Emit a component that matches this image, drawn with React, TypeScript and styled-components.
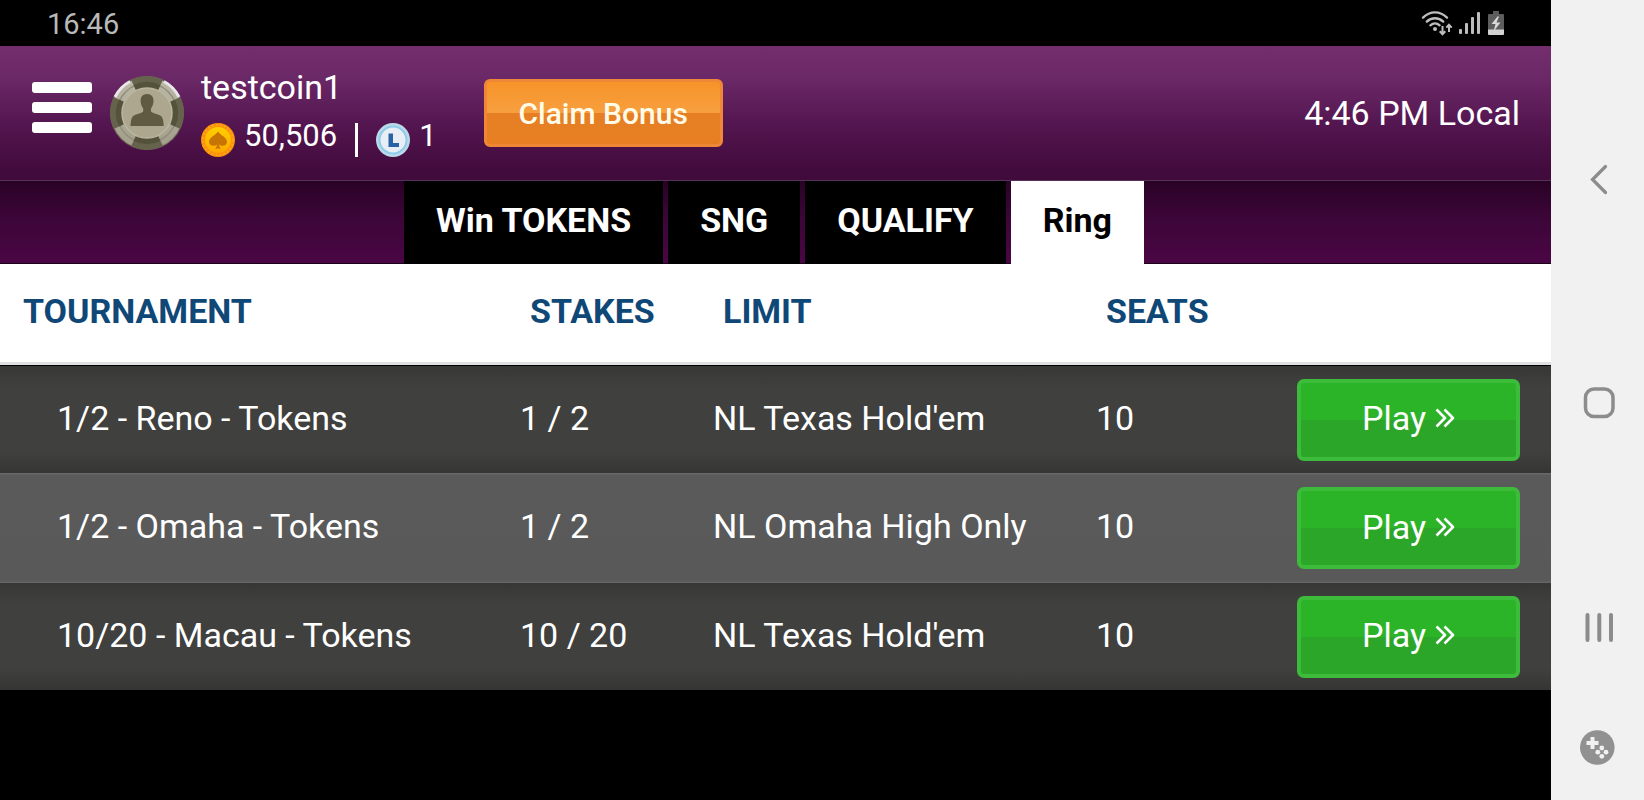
import React from "react";
import styled, { createGlobalStyle } from "styled-components";

const GlobalStyle = createGlobalStyle`
  * { box-sizing: border-box; }
  body { margin: 0; background: #000; }
  button { margin: 0; font-family: inherit; cursor: pointer; }
`;

const Screen = styled.div`
  display: flex;
  min-height: 100vh;
  background: #000;
  color: #fff;
  font-family: Roboto, "Liberation Sans", sans-serif;
  font-size: 34px;
  line-height: 40px;
`;

const Main = styled.div`
  flex: 1;
  min-width: 0;
`;

const StatusBar = styled.div`
  display: flex;
  align-items: center;
  justify-content: space-between;
  height: 46px;
  padding: 2px 47px 0;
  color: #b9b9b9;
  font-size: 29px;
`;

const StatusIcons = styled.div`
  display: flex;
  align-items: center;
  gap: 6px;
  padding-bottom: 2px;
`;

const Header = styled.header`
  display: flex;
  align-items: center;
  height: 135px;
  padding: 0 31px 0 32px;
  border-bottom: 1px solid #55325a;
  background: linear-gradient(#742e6d, #6a2866 25%, #541650 58%, #420b3d 92%, #400a3b);
`;

const MenuButton = styled.button`
  display: flex;
  flex-direction: column;
  gap: 9px;
  padding: 0 0 12px;
  border: 0;
  background: none;
`;

const MenuBar = styled.span`
  width: 60px;
  height: 11px;
  border-radius: 3px;
  background: #fff;
`;

const Avatar = styled.svg`
  width: 74px;
  height: 74px;
  margin: 0 17px 0 18px;
`;

const Account = styled.div`
  display: flex;
  flex-direction: column;
  gap: 16px;
  padding-bottom: 3px;
`;

const Balances = styled.div`
  display: flex;
  align-items: flex-start;
  font-size: 31px;
  line-height: 26px;
`;

const Coin = styled.svg`
  width: 34px;
  height: 34px;
  margin-right: 9px;
`;

const Divider = styled.span`
  width: 3px;
  height: 34px;
  margin: 0 18px;
  background: #fff;
`;

const ClaimButton = styled.button`
  width: 239px;
  height: 68px;
  margin-left: 47px;
  padding: 0;
  border: 3px solid #ee8736;
  border-radius: 6px;
  background: linear-gradient(#f69429, #f79f3f 50%, #e67e24 50%, #e77f22);
  color: #fffbe8;
  font-size: 30px;
  font-weight: 500;
`;

const Clock = styled.time`
  margin-left: auto;
`;

const Tabs = styled.nav`
  display: flex;
  justify-content: center;
  gap: 5px;
  height: 83px;
  padding-right: 3px;
  background: linear-gradient(#2a0226, #3c0638 45%, #4b0645);
  box-shadow: inset 0 -1px #1a0018;
`;

const Tab = styled.button<{ $active?: boolean }>`
  padding: 0 32px 5px;
  border: 0;
  background: ${(p) => (p.$active ? "#fff" : "#000")};
  color: ${(p) => (p.$active ? "#000" : "#fff")};
  font-size: 34px;
  font-weight: 700;
`;

const Lobby = styled.table`
  width: 100%;
  table-layout: fixed;
  border-collapse: collapse;
`;

const HeadRow = styled.tr`
  height: 102px;
  background: linear-gradient(#fff 98px, #dfe0e2 98px, #dfe0e2 101px, #000 101px);
`;

const HeadCell = styled.th<{ $width?: number; $first?: boolean }>`
  width: ${(p) => (p.$width ? `${p.$width}px` : "auto")};
  padding: 0 0 8px ${(p) => (p.$first ? 23 : 20)}px;
  color: #0f4877;
  font-weight: 700;
  text-align: left;
`;

const Row = styled.tr<{ $light?: boolean }>`
  height: ${(p) => (p.$light ? 110 : 107)}px;
  background: ${(p) =>
    p.$light
      ? "linear-gradient(#686868 1px, #5a5a5a 2px, #595959 108px, #6a6a6a)"
      : "linear-gradient(#373735, #40403e 20%, #40403e 80%, #353533)"};
`;

const Cell = styled.td<{ $first?: boolean }>`
  padding: 0 0 4px ${(p) => (p.$first ? 57 : 10)}px;
  white-space: nowrap;
`;

const ActionCell = styled.td`
  padding: 0 31px 0 10px;
`;

const PlayButton = styled.button`
  display: flex;
  align-items: center;
  justify-content: center;
  gap: 9px;
  width: 100%;
  height: 82px;
  padding: 0 0 3px;
  border: 4px solid #3dbb3b;
  border-radius: 7px;
  background: linear-gradient(#2cb429, #2cb429 50%, #2ba629 50%, #2ba629);
  color: #fff;
  font-size: 34px;
`;

const DeviceNav = styled.aside`
  display: flex;
  flex-direction: column;
  align-items: center;
  gap: 176px;
  width: 93px;
  padding: 155px 0 0 3px;
  background: #f1f1f1;
`;

const NavButton = styled.button`
  width: 48px;
  height: 48px;
  padding: 0;
  border: 0;
  background: none;
  line-height: 0;
`;

const NavGroup = styled.div`
  display: flex;
  flex-direction: column;
  gap: 72px;
`;

const WifiIcon = () => (
  <svg width="32" height="26" viewBox="0 0 32 26" fill="none" stroke="#bdbdbd">
    <g strokeWidth="2.4" strokeLinecap="round">
      <path d="M2 7.600C9 .6 19 .6 26 7.600" />
      <path d="M5.800 11.600c4.600-4.500 11.800-4.500 16.400 0" />
      <path d="M9.400 15.300c2.700-2.400 6.500-2.400 9.200 0" />
    </g>
    <circle cx="14" cy="19" r="2" fill="#bdbdbd" stroke="none" />
    <path d="M21.500 16v8M18.700 21.300l2.800 2.900 2.800-2.900M28 22v-7M25.300 17.600l2.700-2.900 2.700 2.900" strokeWidth="2" />
  </svg>
);

const SignalIcon = () => (
  <svg width="23" height="26" viewBox="0 0 23 26" fill="#bdbdbd">
    <rect x="0" y="19" width="3" height="5" rx="1" />
    <rect x="6" y="13" width="3" height="11" rx="1" />
    <rect x="12" y="7" width="3" height="17" rx="1" />
    <rect x="18" y="2" width="3" height="22" rx="1" />
  </svg>
);

const BatteryIcon = () => (
  <svg width="16" height="26" viewBox="0 0 16 26">
    <path d="M5 1h6v3h4a1 1 0 0 1 1 1v15H0V5a1 1 0 0 1 1-1h4z" fill="#5d5d5d" />
    <path d="M0 19.500h16V24a1 1 0 0 1-1 1H1a1 1 0 0 1-1-1z" fill="#d2d2d2" />
    <path d="M9.500 6.500 3.500 14h4L5.500 21.500 12.500 12.500h-4L11 6.500z" fill="#d8d8d8" />
  </svg>
);

const chipSlices = [0, 90, 180, 270];

const ChipAvatar = () => (
  <Avatar viewBox="0 0 74 74" role="img" aria-label="Player avatar">
    <defs>
      <linearGradient id="rim" x1="0" y1="0" x2="0" y2="1">
        <stop offset="0" stopColor="#bdb9aa" />
        <stop offset="1" stopColor="#a19d8a" />
      </linearGradient>
    </defs>
    <circle cx="37" cy="37" r="37" fill="#6d6a55" />
    <circle cx="37" cy="37" r="36" fill="url(#rim)" />
    <path d="M5 21A36 36 0 0 1 20 5.500M54 5.500A36 36 0 0 1 69 21" fill="none" stroke="#e9e6e8" strokeWidth="3" />
    <circle cx="37" cy="37" r="30" fill="none" stroke="#928e79" strokeWidth="1.500" />
    {chipSlices.map((angle) => (
      <g key={angle} transform={`rotate(${angle} 37 37)`}>
        <path d="M21 3.800A37 37 0 0 1 53 3.800L47.500 15A25 25 0 0 0 26.500 15Z" fill="#66634d" />
        <path d="M23.500 9A31 31 0 0 1 50.500 9L47.500 15A25 25 0 0 0 26.500 15Z" fill="#55523c" />
      </g>
    ))}
    <circle cx="37" cy="37" r="25" fill="#aca78e" stroke="#bbb69f" strokeWidth="1.500" />
    <path
      d="M37 18c4.600 0 7 3.200 6.500 8-.3 3-1.500 5-2.500 6.500v3c2.500 2.300 8.500 2.700 10.500 5 1.700 2 2 6 2.200 9.500H20.500c.2-3.500.5-7.500 2.200-9.500 2-2.300 8-2.700 10.500-5v-3c-1-1.500-2.300-3.500-2.500-6.500-.5-4.800 1.800-8 6.300-8z"
      fill="#5f5b42"
    />
  </Avatar>
);

const SpadeCoin = () => (
  <Coin viewBox="0 0 34 34" role="img" aria-label="Coins">
    <defs>
      <linearGradient id="gold" x1="0" y1="0" x2="0" y2="1">
        <stop offset="0" stopColor="#ffd000" />
        <stop offset="1" stopColor="#ffa800" />
      </linearGradient>
    </defs>
    <circle cx="17" cy="17" r="17" fill="#fb9206" />
    <circle cx="17" cy="17" r="15" fill="none" stroke="#fba528" strokeWidth="2" strokeDasharray="2 2" />
    <circle cx="17" cy="17" r="13" fill="url(#gold)" />
    <path
      d="M17 8.500c2 3.500 9 6 9 10.200 0 4-5 5.300-8 2.800.1 1.500.8 3 2 4h-6c1.200-1 1.900-2.500 2-4-3 2.500-8 1.200-8-2.800 0-4.200 7-6.700 9-10.200z"
      fill="#c87404"
    />
  </Coin>
);

const LoyaltyCoin = () => (
  <Coin viewBox="0 0 34 34" role="img" aria-label="L tokens">
    <circle cx="17" cy="17" r="17" fill="#bcd9e9" />
    <circle cx="17" cy="17" r="13.500" fill="#e9eef5" stroke="#8fcbea" strokeWidth="2" />
    <path d="M12.500 24V10.500h4.500v9.500h6V24z" fill="#2a62a6" />
  </Coin>
);

const DoubleChevron = () => (
  <svg width="20" height="20" viewBox="0 0 20 20" fill="none" stroke="#fff" strokeWidth="2.600" aria-hidden="true">
    <path d="M1.500 1.500 10 10l-8.500 8.500M9.500 1.500 18 10l-8.500 8.500" strokeLinejoin="round" />
  </svg>
);

const tabs = ["Win TOKENS", "SNG", "QUALIFY", "Ring"];

const games = [
  { name: "1/2 - Reno - Tokens", stakes: "1 / 2", limit: "NL Texas Hold'em", seats: 10 },
  { name: "1/2 - Omaha - Tokens", stakes: "1 / 2", limit: "NL Omaha High Only", seats: 10 },
  { name: "10/20 - Macau - Tokens", stakes: "10 / 20", limit: "NL Texas Hold'em", seats: 10 },
];

export default function App() {
  return (
    <>
      <GlobalStyle />
      <Screen>
        <Main>
          <StatusBar>
            <span>16:46</span>
            <StatusIcons>
              <WifiIcon />
              <SignalIcon />
              <BatteryIcon />
            </StatusIcons>
          </StatusBar>
          <Header>
            <MenuButton aria-label="Menu">
              <MenuBar />
              <MenuBar />
              <MenuBar />
            </MenuButton>
            <ChipAvatar />
            <Account>
              <span>testcoin1</span>
              <Balances>
                <SpadeCoin />
                <span>50,506</span>
                <Divider />
                <LoyaltyCoin />
                <span>1</span>
              </Balances>
            </Account>
            <ClaimButton>Claim Bonus</ClaimButton>
            <Clock>4:46 PM Local</Clock>
          </Header>
          <Tabs>
            {tabs.map((tab) => (
              <Tab key={tab} $active={tab === "Ring"}>
                {tab}
              </Tab>
            ))}
          </Tabs>
          <Lobby>
            <thead>
              <HeadRow>
                <HeadCell $first>TOURNAMENT</HeadCell>
                <HeadCell $width={193}>STAKES</HeadCell>
                <HeadCell $width={383}>LIMIT</HeadCell>
                <HeadCell $width={201}>SEATS</HeadCell>
                <HeadCell $width={264} aria-label="Action" />
              </HeadRow>
            </thead>
            <tbody>
              {games.map((game, i) => (
                <Row key={game.name} $light={i % 2 === 1}>
                  <Cell $first>{game.name}</Cell>
                  <Cell>{game.stakes}</Cell>
                  <Cell>{game.limit}</Cell>
                  <Cell>{game.seats}</Cell>
                  <ActionCell>
                    <PlayButton>
                      Play
                      <DoubleChevron />
                    </PlayButton>
                  </ActionCell>
                </Row>
              ))}
            </tbody>
          </Lobby>
        </Main>
        <DeviceNav>
          <NavButton aria-label="Back">
            <svg width="48" height="48" viewBox="0 0 48 48" fill="none" stroke="#8c8c8c" strokeWidth="3.200" strokeLinecap="round">
              <path d="M30.500 11.500 17.500 24.500l13 13" />
            </svg>
          </NavButton>
          <NavButton aria-label="Home">
            <svg width="48" height="48" viewBox="0 0 48 48" fill="none" stroke="#8c8c8c" strokeWidth="3.500">
              <rect x="10.500" y="10" width="27.500" height="27.500" rx="8.500" />
            </svg>
          </NavButton>
          <NavGroup>
            <NavButton aria-label="Recent apps">
              <svg width="48" height="48" viewBox="0 0 48 48" fill="none" stroke="#8c8c8c" strokeWidth="4" strokeLinecap="round">
                <path d="M12.500 12v25M24.300 12v25M36 12v25" />
              </svg>
            </NavButton>
            <NavButton aria-label="Game tools">
              <svg width="48" height="48" viewBox="0 0 48 48">
                <circle cx="22.300" cy="24.500" r="17.300" fill="#919191" />
                <path d="M17.500 14v12M11.500 20h12" stroke="#f1f1f1" strokeWidth="4" />
                <g fill="#f1f1f1">
                  <circle cx="26.800" cy="25" r="2.400" />
                  <circle cx="22.800" cy="29.200" r="2.400" />
                  <circle cx="31" cy="29.200" r="2.400" />
                  <circle cx="26.800" cy="33.300" r="2.400" />
                </g>
              </svg>
            </NavButton>
          </NavGroup>
        </DeviceNav>
      </Screen>
    </>
  );
}
